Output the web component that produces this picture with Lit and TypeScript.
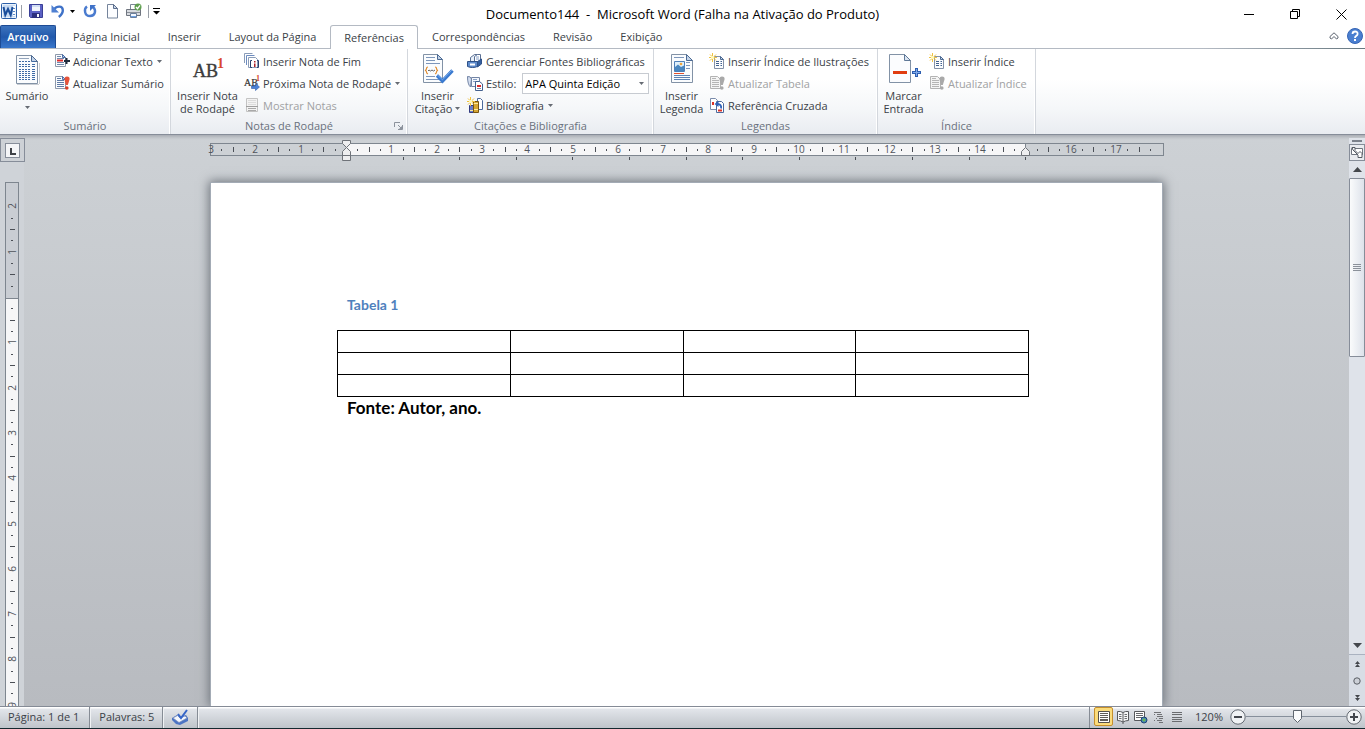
import { LitElement, html, css, svg, nothing } from "lit";
import { customElement, state } from "lit/decorators.js";

const icon = (size: number, body: unknown) => html`<svg
  class="icon" width=${size} height=${size} viewBox="0 0 ${size} ${size}" aria-hidden="true">${body}</svg>`;

const lines = (xs: number[], ys: number[], color: string) =>
  ys.map((y) => svg`<path d="M${xs[0]} ${y}.5H${xs[1]}" stroke=${color} fill="none"/>`);

/* Large sheet with a folded corner, shared by the 32px icons */
const bigSheet = svg`
  <path d="M6 31.5h22M28.5 10v21" stroke="#c9ced4" fill="none"/>
  <path d="M5.5 2.5h15l6 6v22h-21z" fill="#fafcfe" stroke="#8292a6"/>
  <path d="M20.500 2.500v6h6z" fill="#c3d3e8" stroke="#4c6a93"/>`;

const smallSheet = svg`
  <path d="M1.500 1.500h7l3 3v9h-10z" fill="#fbfcfe" stroke="#8d99ab"/>
  <path d="M8.500 1.500v3h3z" fill="#b9cbe6" stroke="#4c6fa8"/>`;

const spark = svg`
  <path d="M3.500 0v9M0 4.500h8M1 1.500l6 6M7 1.500l-6 6" stroke="#f0c340" fill="none"/>
  <rect x="2" y="3" width="3" height="3" fill="#fff6b8"/>`;

const icons = {
  word: icon(16, svg`
    <rect x=".5" y=".5" width="15" height="15" rx="1" fill="#eaf2fb" stroke="#2c5fa8"/>
    <path d="M2 2h12v12H2z" fill="#c7daf2"/><path d="M12 3h2v10h-2z" fill="#fff"/>
    <path d="M12 5.500h2M12 8.500h2M12 11.500h2" stroke="#5c8bc9"/>
    <path d="M2.500 4l1.800 8 2.700-6 2.700 6 1.800-8" fill="none" stroke="#1b4e9b" stroke-width="2"/>`),
  save: icon(16, svg`
    <path d="M1.500 1.500h13v13h-12l-1-1z" fill="#5b61c4" stroke="#3a3f96"/>
    <path d="M4 2h8v6H4z" fill="#f1f4fb"/><path d="M4 2h8v2H4z" fill="#cfdcf3"/>
    <path d="M4 10h8v5H4z" fill="#2c3080"/><path d="M9 11h2v3H9z" fill="#f5f6fb"/>`),
  undo: icon(16, svg`
    <path d="M4 6.500C7 2.500 12.500 2.800 12.800 7c.2 2.800-1.600 5-4 7" fill="none" stroke="#3f72c8" stroke-width="2.400"/>
    <path d="M1.500 2v7.500H9z" fill="#4f80d2"/>`),
  redo: icon(16, svg`
    <path d="M5 3.500C1.500 6 2.500 13 8 13s6.500-6 3-9" fill="none" stroke="#4a7bcf" stroke-width="2.400"/>
    <path d="M8 2h6L8 8z" fill="#3f72c8"/>`),
  blank: icon(16, svg`
    <path d="M3.500 1.500h6l4 4v9.500h-10z" fill="#fcfdff" stroke="#75849b"/>
    <path d="M9.500 1.500v4h4z" fill="#cbd8ea" stroke="#5d6f8d"/>`),
  print: icon(16, svg`
    <path d="M4.500 1.500h6v5h-6z" fill="#fff" stroke="#7c8696"/>
    <path d="M.5 6.500h14v6H.5z" fill="#d8dbe0" stroke="#6f757f"/>
    <path d="M1 9h13v1H1z" fill="#8a9099"/><path d="M4.500 10.500h6v4h-6z" fill="#f3f8ff" stroke="#6a7e9c"/>
    <path d="M5 13h5v1H5z" fill="#6ba0e2"/>
    <circle cx="12" cy="4" r="3.500" fill="#5f9f4f"/><path d="M10 4l1.500 1.700L14 2.300" fill="none" stroke="#fff" stroke-width="1.300"/>`),
  toc: icon(32, svg`${bigSheet}
    ${lines([8, 18], [5], "#93a4bb")}
    ${[8, 11, 13, 16, 18, 20, 22, 24, 26].map((y) => svg`
      <path d="M8 ${y}.5H19" stroke="#3f6ba6" stroke-dasharray="2 1" fill="none"/>
      <path d="M21 ${y}.5H24" stroke="#3f6ba6" fill="none"/>`)}`),
  addText: icon(16, svg`${smallSheet}
    ${lines([3, 7], [3], "#7189ad")}${lines([3, 10], [5, 9, 11], "#7189ad")}
    <path d="M3 7.500h6" stroke="#e02c2c" stroke-width="2"/>
    <path d="M12.500 5v6M10 8h6" stroke="#1f2a3c" stroke-width="2"/>`),
  refresh: icon(16, svg`${smallSheet}
    ${lines([3, 7], [3], "#5f7ba6")}${lines([3, 10], [5, 7, 9, 11], "#5f7ba6")}
    <path d="M13 1.500q3 0 2.500 3L13.800 10h-2L10.500 4.500q-.3-3 2.500-3z" fill="#e5533a"/>
    <circle cx="12.800" cy="13" r="1.800" fill="#d8402a"/>`),
  refreshOff: icon(16, svg`
    <path d="M1.500 1.500h7l3 3v9h-10z" fill="#f4f4f4" stroke="#b3b3b3"/>
    ${lines([3, 7], [3], "#b5b5b5")}${lines([3, 10], [5, 7, 9, 11], "#b5b5b5")}
    <path d="M13 1.500q3 0 2.500 3L13.800 10h-2L10.500 4.500q-.3-3 2.500-3z" fill="#a9a9a9"/>
    <circle cx="12.800" cy="13" r="1.800" fill="#a9a9a9"/>`),
  footnote: icon(32, svg`
    <text class="serif" x="1" y="24" font-size="18" fill="#3c3c3c" stroke="#3c3c3c" stroke-width=".4">AB</text>
    <text class="serif" x="25" y="15" font-size="14" font-weight="bold" fill="#d9482b">1</text>`),
  endnote: icon(16, svg`
    <path d="M.5 10V.5h8" fill="none" stroke="#8a9cb8"/>
    <path d="M2.500 12V2.500h8" fill="none" stroke="#6d8cc0"/>
    <path d="M4.500 4.500h7l2 2v8h-9z" fill="#fff" stroke="#8a9cb8"/>
    <path d="M8 7.500H6.500v7H8M13 7.500h1.500v7H13" fill="none" stroke="#27406e"/>
    <path d="M10 8h1.500v1.500H10zM10 10.500h1.500v3.500H10z" fill="#a8202a"/>`),
  nextNote: icon(16, svg`
    <text class="serif" x="0" y="11" font-size="10" fill="#333" stroke="#333" stroke-width=".2">AB</text>
    <text class="serif" x="12" y="6" font-size="8" font-weight="bold" fill="#d9482b">1</text>
    <path d="M7.500 11h4V8.500l4 3.500-4 3.500V13.500h-4z" fill="#4b82d8" stroke="#2d5dab" stroke-width=".6"/>`),
  showNotes: icon(16, svg`
    <path d="M2.500 1.500h11v13h-11z" fill="#f3f3f3" stroke="#c3c3c3"/>
    ${lines([4, 12], [3, 5, 7], "#dcdcdc")}<path d="M2 9.500h12" stroke="#9f9f9f"/>
    ${lines([4, 12], [11, 13], "#a9a9a9")}`),
  citation: icon(32, svg`
    <path d="M1.500 1.500h14l5 5v23h-19z" fill="#fafcfe" stroke="#8292a6"/>
    <path d="M15.500 1.500v5h5z" fill="#c3d3e8" stroke="#4c6a93"/>
    ${lines([4, 13], [4, 7], "#7d96ba")}${lines([4, 18], [10, 26], "#7d96ba")}
    <path d="M6 14q-1.500 0-1.500 1.500T3 17.500q1.500 0 1.500 1.500T6 21M13 14q1.500 0 1.500 1.500t1.500 2q-1.500 0-1.500 1.500T13 21" fill="none" stroke="#e08a2c" stroke-width="1.200"/>
    <path d="M6 18l1-1 1.500 1 1.500-1 1.500 1 1.500-1" fill="none" stroke="#666"/>
    ${lines([4, 13], [23], "#7d96ba")}
    <path d="M15 22.500l5.500 5.500L30.500 17.500" fill="none" stroke="#3a7ad0" stroke-width="3.400"/>
    <path d="M15.500 22l5 4.800L30 17" fill="none" stroke="#74a8ea"/>`),
  sources: icon(16, svg`
    <path d="M3.500 8V4.500l4-3h4v8" fill="#e8f0fa" stroke="#5a6f92"/>
    <path d="M7.500 8V3.500l3-2h3v9" fill="#fff" stroke="#5a6f92"/>
    <path d="M9 4h3M9 6h3" stroke="#86a0c8"/>
    <path d="M.5 8.500h10v5q-2.500 1-5 1t-5-1z" fill="#5f8ccd" stroke="#2e5188"/>
    <path d="M10.500 8.500l4-2.500v5l-4 3z" fill="#345f9f" stroke="#2e5188"/>
    <path d="M3 10.500h5v2H3z" fill="#fff"/>`),
  styleIcon: icon(16, svg`
    <path d="M.5 1.500q0 8 3 10.500l1-8q-1-3-4-2.500z" fill="#d4def0" stroke="#7284a5"/>
    <path d="M4.500 2.500h8v9h-8z" fill="#f4f7fc" stroke="#7284a5"/>
    <path d="M6 4.500h4M6 6.500h3" stroke="#8aa0c5"/>
    <path d="M8.500 6.500h4l3 2.500v6.500h-7z" fill="#fff" stroke="#44618f"/>
    <path d="M10 11h4" stroke="#dc2d2d" stroke-width="2"/><path d="M10 13.500h4" stroke="#7189ad"/>`),
  biblio: icon(16, svg`
    <path d="M10.500 1.500h3l2 2v9h-5z" fill="#fff" stroke="#4c6a9c"/>
    <path d="M2.500 8.500h4v7h-4z" fill="#6a7dcc" stroke="#333c80"/>
    <path d="M6.500 4.500h5v11h-5z" fill="#d6a632" stroke="#775511"/>
    <path d="M7 6.500h4M7 12.500h4M3 13.500h3" stroke="#fbe9a0"/>
    ${spark}`),
  caption: icon(32, svg`
    <path d="M5.500 1.500h15l6 6v22h-21z" fill="#fafcfe" stroke="#8292a6"/>
    <path d="M20.500 1.500v6h6z" fill="#c3d3e8" stroke="#4c6a93"/>
    ${lines([8, 18], [4], "#7d96ba")}${lines([8, 24], [22, 24, 26], "#5f83b4")}
    <path d="M8.500 8.500h10v10h-10z" fill="#dff0fc" stroke="#4f7fb8"/>
    <path d="M9 18v-4l3-2.500 3 2.500 3-1.500V18z" fill="#4a87c0"/><circle cx="15" cy="11" r="1.300" fill="#f3a63a"/>
    <path d="M20 9.500h4M20 12.500h4M20 15.500h4" stroke="#7d96ba"/>
    <path d="M8 20.500h10" stroke="#e4512d"/>`),
  figures: icon(16, svg`
    <path d="M5.500 3.500h6l3 3v9h-9z" fill="#fbfcfe" stroke="#8391a8"/>
    <path d="M11.500 3.500v3h3z" fill="#c5d5ea" stroke="#4c6a93"/>
    <path d="M7 8.500h3M7 10.500h3M7 12.500h3M11.500 8.500H13M11.500 10.500H13M11.500 12.500H13" stroke="#41618f"/>
    ${spark}`),
  crossRef: icon(16, svg`
    <path d="M1.500 1.500h5l2 2v9h-7z" fill="#fff" stroke="#7b8cab"/>
    <path d="M7.500 4.500h5l2 2v9h-7z" fill="#fff" stroke="#4c6a9c"/>
    <path d="M3 5h2v3H3z" fill="#dd3326"/><path d="M9 13.500h4" stroke="#dd3326" stroke-width="2"/>
    <path d="M12 11.500q1-4-3.500-4.500" fill="none" stroke="#2f62b8" stroke-width="1.800"/>
    <path d="M9.500 4v6L5.500 7z" fill="#2f62b8"/>`),
  markEntry: icon(32, svg`
    <path d="M1.500 1.500h15l6 6v22h-21z" fill="#fbfcfe" stroke="#8292a6"/>
    <path d="M16.500 1.500v6h6z" fill="#dbe5f2" stroke="#5f7897"/>
    <path d="M5 19.500h14" stroke="#e03c10" stroke-width="3"/>
    <path d="M28.500 15v9M24 19.500h9" stroke="#2f5fb0" stroke-width="3"/>
    <path d="M28.500 16v7M25 19.500h7" stroke="#7fa9ea"/>`),
  proof: icon(18, svg`
    <path d="M1 10l5-3 3 2 6-2 2 3v3l-8 4-4-1-4-4z" fill="#4c74c4"/>
    <path d="M2 10l4.500-2.500L9 10l5-2 2 2-8 4.500z" fill="#f4f7fd" stroke="#7b8fba" stroke-width=".7"/>
    <path d="M7 6l3 4 6-8" fill="none" stroke="#3565c8" stroke-width="2"/>`),
  viewPrint: icon(16, svg`
    <path d="M2.500 2.500h11v11h-11z" fill="#fff" stroke="#54504a"/>
    ${lines([4, 12], [4, 6, 8, 10, 11], "#5f5c58")}`),
  viewRead: icon(16, svg`
    <path d="M2.500 2.500q3-.5 5.500 1 2.500-1.500 5.500-1v9q-3 0-5.500 1.500Q5.500 11.500 2.500 11.500zM8 3.500V15" fill="#f7f7f7" stroke="#57595c"/>
    <path d="M4 5.500h2.500M4 7.500h2.500M4 9.500h2.500M9.500 5.500H12M9.500 7.500H12M9.500 9.500H12" stroke="#6d6f72"/>`),
  viewWeb: icon(16, svg`
    <path d="M1.500 2.500h10v9h-10z" fill="#fff" stroke="#57595c"/>
    ${lines([3, 10], [4, 6, 8], "#66686b")}
    <circle cx="11" cy="11" r="3" fill="#3e7fc4" stroke="#22466f"/><path d="M9 11l2-2 2 2-2 2z" fill="#69b554"/>`),
  viewOutline: icon(16, svg`
    <path d="M3 3.500h7M6 5.500h5M6 7.500h6M8 9.500h4M6 11.500h5M8 13.500h4" stroke="#707275"/>
    <path d="M3 5.500h1M3 11.500h1M5 9.500h1" stroke="#707275"/>`),
  viewDraft: icon(16, svg`${lines([3, 13], [3, 5, 8, 10, 12], "#6a6c6f")}`),
};

const caret = html`<svg class="caret" width="5" height="3" viewBox="0 0 5 3" aria-hidden="true"><path d="M0 0h5L2.500 3z"/></svg>`;

interface Item { icon: unknown; label: string; menu?: boolean; off?: boolean; picker?: boolean; }
interface Group { name: string; cls: string; big: { icon: unknown; label: string[]; menu?: "inline" | "below" }; items: Item[]; launcher?: boolean; }

const GROUPS: Group[] = [
  { name: "Sumário", cls: "toc", big: { icon: icons.toc, label: ["Sumário"], menu: "below" }, items: [
    { icon: icons.addText, label: "Adicionar Texto", menu: true },
    { icon: icons.refresh, label: "Atualizar Sumário" }] },
  { name: "Notas de Rodapé", cls: "notes", launcher: true, big: { icon: icons.footnote, label: ["Inserir Nota", "de Rodapé"] }, items: [
    { icon: icons.endnote, label: "Inserir Nota de Fim" },
    { icon: icons.nextNote, label: "Próxima Nota de Rodapé", menu: true },
    { icon: icons.showNotes, label: "Mostrar Notas", off: true }] },
  { name: "Citações e Bibliografia", cls: "cites", big: { icon: icons.citation, label: ["Inserir", "Citação"], menu: "inline" }, items: [
    { icon: icons.sources, label: "Gerenciar Fontes Bibliográficas" },
    { icon: icons.styleIcon, label: "Estilo:", picker: true },
    { icon: icons.biblio, label: "Bibliografia", menu: true }] },
  { name: "Legendas", cls: "captions", big: { icon: icons.caption, label: ["Inserir", "Legenda"] }, items: [
    { icon: icons.figures, label: "Inserir Índice de Ilustrações" },
    { icon: icons.refreshOff, label: "Atualizar Tabela", off: true },
    { icon: icons.crossRef, label: "Referência Cruzada" }] },
  { name: "Índice", cls: "index", big: { icon: icons.markEntry, label: ["Marcar", "Entrada"] }, items: [
    { icon: icons.figures, label: "Inserir Índice" },
    { icon: icons.refreshOff, label: "Atualizar Índice", off: true }] },
];

const TABS = ["Página Inicial", "Inserir", "Layout da Página", "Referências", "Correspondências", "Revisão", "Exibição"];

@customElement("word-ribbon")
class WordRibbon extends LitElement {
  @state() private active = "Referências";

  static styles = css`
    :host { display: block; color: #3b3f47; font: 11px/13px "Open Sans", "Noto Sans", sans-serif; }
    button, select { font: inherit; color: inherit; border: 0; margin: 0; padding: 0; background: none; }
    svg { display: block; flex: none; overflow: visible; }
    .serif { font-family: "Liberation Serif", serif; }
    .caret { fill: #666b73; }
    .tabs { display: flex; height: 23px; border-bottom: 1px solid #b4bac3; border-image: linear-gradient(90deg, #b4bac3 88%, #66777f) 1; }
    .file { width: 56px; background: linear-gradient(#3c73bd, #2259ac 50%, #3a78cc); color: #fff; font-weight: 600; border-radius: 2px 2px 0 0; margin-right: 3px; border: 1px solid #1d4b94; border-bottom: 0; padding-bottom: 1px; }
    .tab { padding: 0 14px; white-space: nowrap; }
    .tab.on { background: #fff; border: 1px solid #b4bac3; border-bottom: 0; border-radius: 3px 3px 0 0; padding: 0 13px; height: 24px; }
    .tools { margin-left: auto; display: flex; align-items: center; gap: 8px; padding: 0 2px 2px 0; }
    .panel { display: flex; height: 85px; background: linear-gradient(#fff 35%, #f5f7f9 70%, #e9ecf1); border-bottom: 1px solid #868d99; }
    .group { display: grid; grid-template-rows: 68px 1fr; border-right: 1px solid #d3d7dd; box-shadow: inset -1px 0 #fff; }
    .toc { grid-template-columns: 54px 116px; }
    .notes { grid-template-columns: 73px 163px; }
    .cites { grid-template-columns: 59px 186px; }
    .captions { grid-template-columns: 55px 168px; }
    .index { grid-template-columns: 51px 106px; }
    .big { display: flex; flex-direction: column; align-items: center; padding-top: 4px; white-space: nowrap; }
    .big .words { padding-top: 4px; display: block; }
    .big .below { margin-top: 4px; }
    .line { display: flex; align-items: center; justify-content: center; gap: 3px; }
    .items { padding-top: 1px; display: grid; grid-auto-rows: 22px; align-content: start; }
    .item { display: flex; align-items: center; gap: 3px; white-space: nowrap; text-align: left; }
    .item .caret { margin-left: 1px; }
    .item:disabled { color: #a0a1a3; }
    .picker { position: relative; flex: none; width: 127px; height: 21px; margin-left: 3px; }
    .picker select { appearance: none; width: 100%; height: 100%; border: 1px solid #c7cbd1; background: #fff; color: #000; padding: 0 2px; }
    .picker .caret { position: absolute; right: 5px; top: 9px; }
    .name { grid-column: 1 / -1; display: flex; align-items: center; justify-content: center; color: #6a717d; position: relative; }
    .launch { position: absolute; right: 4px; top: 4px; }
  `;

  private renderItem(it: Item) {
    if (it.picker) {
      return html`<div class="item">${it.icon}<label for="style">${it.label}</label>
        <span class="picker"><select id="style"><option>APA Quinta Edição</option></select>${caret}</span></div>`;
    }
    return html`<button class="item" ?disabled=${!!it.off}>${it.icon}<span>${it.label}</span>${it.menu ? caret : nothing}</button>`;
  }

  render() {
    return html`
      <nav class="tabs">
        <button class="file">Arquivo</button>
        ${TABS.map((t) => html`<button class="tab ${t === this.active ? "on" : ""}" @click=${() => (this.active = t)}>${t}</button>`)}
        <div class="tools">
          <button aria-label="Minimizar a Faixa de Opções"><svg width="10" height="8" viewBox="0 0 10 8"><path d="M1 6V4.500L5 .8 9 4.500V6L7.500 7 5 4.500 2.500 7z" fill="#fff" stroke="#5c6470"/></svg></button>
          <button aria-label="Ajuda"><svg width="16" height="16" viewBox="0 0 16 16"><circle cx="8" cy="8" r="7.500" fill="#4a7fd0" stroke="#3565b5"/><path d="M5.500 6q0-2.500 2.600-2.500T10.600 6q0 1.200-1.300 1.900T8 10" fill="none" stroke="#fff" stroke-width="1.800"/><rect x="7" y="11" width="2" height="2" fill="#fff"/></svg></button>
        </div>
      </nav>
      <section class="panel">
        ${GROUPS.map((g) => html`
          <div class="group ${g.cls}">
            <button class="big">${g.big.icon}
              <span class="words">${g.big.label.map((l, i) => html`<span class="line">${l}${g.big.menu === "inline" && i === 1 ? caret : nothing}</span>`)}</span>
              ${g.big.menu === "below" ? html`<span class="below">${caret}</span>` : nothing}
            </button>
            <div class="items">${g.items.map((i) => this.renderItem(i))}</div>
            <div class="name">${g.name}${g.launcher ? html`<button class="launch" aria-label=${g.name}>
              <svg width="9" height="9" viewBox="0 0 9 9"><path d="M.5 6V1.500H6M8.500 4v4.500H4M4 4l3 3" fill="none" stroke="#8c929c"/><path d="M8 5v3H5z" fill="#8c929c"/></svg></button>` : nothing}</div>
          </div>`)}
      </section>`;
  }
}

const CM = 45.3;

@customElement("word-workspace")
class WordWorkspace extends LitElement {
  static styles = css`
    :host { display: flex; min-height: 0; overflow: hidden; font: 9px/12px "Open Sans", sans-serif; color: #3b3f47; background: linear-gradient(#a9adb4, #c3c7cc 3px, transparent 5px), linear-gradient(#cdd1d5, #b8bbc0); }
    svg { display: block; flex: none; overflow: visible; }
    button { display: grid; place-items: center; border: 0; margin: 0; padding: 0; background: none; }
    text { font-size: 10px; fill: #50545b; text-anchor: middle; }
    .side { width: 24px; flex: none; display: flex; flex-direction: column; min-height: 0; background: linear-gradient(transparent 5px, #cfd3d8 5px); }
    .corner { width: 25px; height: 24px; margin-top: 3px; border: 1px solid #868d99; background: #cdd1d6; flex: none; }
    .vruler { margin: 20px 0 0 5px; flex: 1 1 0; min-height: 0; width: 14px; box-sizing: border-box; border: 1px solid #7e868f; border-bottom: 0; background: #f6f6f7; overflow: hidden; }
    .stage { flex: 1; min-width: 0; display: flex; flex-direction: column; align-items: center; padding-top: 8px; }
    .page { width: 953px; flex: 1; margin-top: 20px; box-sizing: border-box; border: 1px solid #a3abb5; border-bottom: 0; background: #fff; box-shadow: 0 0 10px 1px #6d737b; padding: 113px 134px 0 126px; font-family: Lato, "Open Sans", sans-serif; font-weight: 700; }
    .caption { margin: 0; padding-left: 10px; font-size: 14px; line-height: 18px; color: #4f81bd; }
    .data { width: 692px; margin-top: 16px; border-collapse: collapse; table-layout: fixed; }
    .data td { height: 21px; padding: 0; border: 1px solid #000; }
    .source { margin: 0; padding-left: 10px; font-size: 17px; line-height: 22px; color: #000; }
    .scroll { width: 16px; flex: none; display: flex; flex-direction: column; background: #dfe3ea; margin-top: 3px; }
    .split { height: 2px; margin: 2px 3px; background: #7b818b; }
    .toggle { height: 17px; border: 1px solid #868d99; background: #e9ebef; }
    .arrow { height: 17px; }
    .thumb { height: 179px; box-sizing: border-box; border: 1px solid #868d99; border-radius: 1px; background: linear-gradient(90deg, #fafbfc, #dde2ea); display: grid; place-items: center; }
    .track { flex: 1; }
    .browse { border-top: 1px solid #aab2c0; height: 51px; display: grid; grid-template-rows: repeat(3, 17px); background: #d8dde5; }
  `;

  private hruler() {
    const origin = 136;
    const marks = [];
    for (let q = -11; q <= 71; q++) {
      const x = Math.round(origin + (q * CM) / 4);
      if (q === 0 || q === 60) continue;
      if (q % 4 === 0) marks.push(svg`<text x=${x} y="10">${Math.abs(q / 4)}</text>`);
      else marks.push(svg`<rect x=${x} y=${q % 2 ? 6 : 4} width="1" height=${q % 2 ? 2 : 5} fill="#4b4f56"/>`);
    }
    const stops = Array.from({ length: 12 }, (_, i) => Math.round(origin + (i + 1) * 56.6));
    return html`<svg width="953" height="19" viewBox="0 0 953 19" role="img" aria-label="Régua horizontal">
      <rect x=".5" y=".5" width="953" height="12" fill="#cdd1d5" stroke="#7e868f"/>
      <rect x="136" y="1" width="679" height="11" fill="#f6f6f7"/>
      <text x="1" y="10">3</text>${marks}
      ${stops.map((x) => svg`<rect x=${x} y="14" width="1" height="3" fill="#4b4f56"/>`)}
      <path d="M132.500-2.500h8v3l-4 4-4-4zM132.500 12.500v-4l4-4 4 4v4zM132.500 12.500h8v5h-8z" fill="#eeeeef" stroke="#6f7379"/>
      <path d="M811.500 12.500v-4l4-4 4 4v4z" fill="#eeeeef" stroke="#6f7379"/>
      <path d="M815.500 0v4" stroke="#7e868f"/>
    </svg>`;
  }

  private vruler() {
    const origin = 114;
    const marks = [];
    for (let q = -8; q <= 35; q++) {
      const y = Math.round(origin + (q * CM) / 4);
      if (q === 0) continue;
      if (q % 4 === 0) marks.push(svg`<text transform="translate(10 ${y}) rotate(-90)">${Math.abs(q / 4)}</text>`);
      else marks.push(svg`<rect x=${q % 2 ? 5 : 4} y=${y} width=${q % 2 ? 2 : 5} height="1" fill="#4b4f56"/>`);
    }
    return html`<div class="vruler"><svg width="12" height="526" viewBox="0 0 12 526" role="img" aria-label="Régua vertical">
      <rect x="0" y="0" width="12" height="115" fill="#c9cdd3"/><path d="M0 115.500h12" stroke="#7e868f"/>${marks}
      <text transform="translate(10 522) rotate(-90)">9</text>
    </svg></div>`;
  }

  render() {
    return html`
      <div class="side">
        <button class="corner" aria-label="Tabulação"><svg width="15" height="15" viewBox="0 0 15 15"><rect x=".5" y=".5" width="14" height="14" fill="#f4f5f7" stroke="#868d99"/><path d="M6 5v6h5" fill="none" stroke="#3f4247" stroke-width="2"/></svg></button>
        ${this.vruler()}
      </div>
      <div class="stage">
        <div class="ruler">${this.hruler()}</div>
        <main class="page">
          <p class="caption">Tabela 1</p>
          <table class="data"><tbody>${[0, 1, 2].map(() => html`<tr>${[0, 1, 2, 3].map(() => html`<td></td>`)}</tr>`)}</tbody></table>
          <p class="source">Fonte: Autor, ano.</p>
        </main>
      </div>
      <div class="scroll">
        <div class="split"></div>
        <button class="toggle" aria-label="Régua"><svg width="12" height="12" viewBox="0 0 12 12"><path d="M.5 1.500h11v6h-11z" fill="#fff" stroke="#6f757e"/><path d="M1 .5h3v3l3 3 2-2 2 2v4H7V8L2 3z" fill="#fff" stroke="#555b64"/></svg></button>
        <button class="arrow" aria-label="Rolar para cima"><svg width="9" height="5" viewBox="0 0 9 5"><path d="M4.500 0L9 5H0z" fill="#44474c"/></svg></button>
        <div class="thumb"><svg width="8" height="7" viewBox="0 0 8 7"><path d="M0 .5h8M0 2.500h8M0 4.500h8M0 6.500h8" stroke="#8b919a"/></svg></div>
        <div class="track"></div>
        <button class="arrow" aria-label="Rolar para baixo"><svg width="9" height="5" viewBox="0 0 9 5"><path d="M0 0h9L4.500 5z" fill="#44474c"/></svg></button>
        <div class="browse">
          <button aria-label="Página anterior"><svg width="5" height="6" viewBox="0 0 5 6"><path d="M2.500 0L5 3H0zM2.500 3L5 6H0z" fill="#44474c"/></svg></button>
          <button aria-label="Selecionar objeto"><svg width="8" height="8" viewBox="0 0 8 8"><circle cx="4" cy="4" r="3.200" fill="#ccd0d7" stroke="#5a5e65"/></svg></button>
          <button aria-label="Próxima página"><svg width="5" height="6" viewBox="0 0 5 6"><path d="M0 0h5L2.500 3zM0 3h5L2.500 6z" fill="#44474c"/></svg></button>
        </div>
      </div>`;
  }
}

@customElement("app-root")
class AppRoot extends LitElement {
  static styles = css`
    :host { display: grid; grid-template-rows: 25px auto minmax(0, 1fr) 22px 1px; grid-template-columns: minmax(0, 1fr); height: 100vh; background: #fff; color: #3b3f47; font: 11px/13px "Open Sans", "Noto Sans", sans-serif; }
    button { display: grid; place-items: center; border: 0; margin: 0; padding: 0; background: none; font: inherit; color: inherit; }
    svg { display: block; flex: none; overflow: visible; }
    .title { display: grid; grid-template-columns: 1fr auto 1fr; align-items: center; color: #000; }
    .quick { display: flex; align-items: center; padding: 0 0 3px 1px; }
    .quick .bar { width: 1px; height: 13px; background: #9a9fa8; margin: 0 6px 0 4px; }
    .quick .narrow { margin: 0 3px 0 4px; }
    .quick .gap { margin-right: 7px; }
    .quick .wide { margin-right: 6px; }
    .quick .end { margin: 0 4px 0 6px; }
    .caption { font: 400 13px/18px "Open Sans", "Noto Sans", sans-serif; margin: 0; white-space: pre; padding-top: 2px; }
    .window { display: flex; justify-content: flex-end; align-items: center; gap: 36px; padding: 3px 18px 0 0; }
    .status { display: flex; align-items: stretch; border-top: 1px solid #858b96; background: linear-gradient(#fff 1px, #e2e5ea 2px, #bfc4ca); }
    .cell { display: flex; align-items: center; padding: 0 8px 2px 9px; border-right: 1px solid #868c95; box-shadow: 1px 0 #f0f2f4; white-space: nowrap; }
    .cell:first-child { padding: 0 10px 2px 8px; }
    button.cell { padding: 0 8px 2px; }
    .views { margin-left: auto; display: flex; align-items: center; gap: 1px; padding: 0 10px 2px 4px; border-left: 1px solid #868c95; }
    .view { width: 17px; height: 19px; }
    .view.on { width: 19px; box-sizing: border-box; border: 1px solid #c58f2c; border-radius: 2px; background: #fbdc7c; }
    .zoom { display: flex; align-items: center; padding: 0 3px 2px 0; }
    .pct { margin-right: 7px; }
    .range { appearance: none; width: 100px; height: 17px; margin: 0; background: linear-gradient(#868f9b, #868f9b) center / 100% 1px no-repeat; }
    .range::-webkit-slider-thumb { appearance: none; width: 9px; height: 13px; background: url("data:image/svg+xml,%3Csvg xmlns='http://www.w3.org/2000/svg' width='9' height='13'%3E%3Cpath d='M.5 .5h8v8l-4 4-4-4z' fill='%23fafbfc' stroke='%235f666f'/%3E%3C/svg%3E") no-repeat; }
    .edge { background: #14292f; }
  `;

  render() {
    return html`
      <header class="title">
        <div class="quick">
          <button class="word" aria-label="Word">${icons.word}</button><span class="bar"></span>
          <button class="wide" aria-label="Salvar">${icons.save}</button>
          <button aria-label="Desfazer">${icons.undo}</button>
          <button class="gap narrow" aria-label="Opções de desfazer"><svg width="5" height="3" viewBox="0 0 5 3"><path d="M0 0h5L2.500 3z"/></svg></button>
          <button class="wide" aria-label="Refazer">${icons.redo}</button>
          <button class="wide" aria-label="Novo">${icons.blank}</button>
          <button aria-label="Impressão rápida">${icons.print}</button><span class="bar end"></span>
          <button aria-label="Personalizar"><svg width="7" height="7" viewBox="0 0 7 7"><path d="M0 0h7v1H0zM0 3h7L3.500 6.500z"/></svg></button>
        </div>
        <h1 class="caption">Documento144  -  Microsoft Word (Falha na Ativação do Produto)</h1>
        <div class="window">
          <button aria-label="Minimizar"><svg width="10" height="11" viewBox="0 0 10 11"><path d="M0 5.500h10" stroke="#000"/></svg></button>
          <button aria-label="Restaurar"><svg width="10" height="10" viewBox="0 0 10 10"><path d="M.5 2.500h7v7h-7zM2.500 2.500v-2h7v7h-2" fill="none" stroke="#000"/></svg></button>
          <button aria-label="Fechar"><svg width="11" height="11" viewBox="0 0 11 11"><path d="M.5 .5l10 10M10.500 .5l-10 10" stroke="#000"/></svg></button>
        </div>
      </header>
      <word-ribbon></word-ribbon>
      <word-workspace></word-workspace>
      <footer class="status">
        <span class="cell">Página: 1 de 1</span>
        <span class="cell">Palavras: 5</span>
        <button class="cell" aria-label="Revisão de texto">${icons.proof}</button>
        <div class="views">
          <button class="view on" aria-label="Layout de Impressão">${icons.viewPrint}</button>
          <button class="view" aria-label="Leitura em Tela Inteira">${icons.viewRead}</button>
          <button class="view" aria-label="Layout da Web">${icons.viewWeb}</button>
          <button class="view" aria-label="Estrutura de Tópicos">${icons.viewOutline}</button>
          <button class="view" aria-label="Rascunho">${icons.viewDraft}</button>
        </div>
        <div class="zoom">
          <span class="pct">120%</span>
          <button aria-label="Reduzir"><svg width="16" height="16" viewBox="0 0 16 16"><circle cx="8" cy="8" r="7.200" fill="#f0f2f4" stroke="#646a72"/><path d="M4 8h8" stroke="#43474d" stroke-width="2"/></svg></button>
          <input class="range" type="range" min="0" max="100" value="52" aria-label="Zoom">
          <button aria-label="Ampliar"><svg width="16" height="16" viewBox="0 0 16 16"><circle cx="8" cy="8" r="7.200" fill="#f0f2f4" stroke="#646a72"/><path d="M4 8h8M8 4v8" stroke="#43474d" stroke-width="2"/></svg></button>
        </div>
      </footer>
      <div class="edge"></div>`;
  }
}
